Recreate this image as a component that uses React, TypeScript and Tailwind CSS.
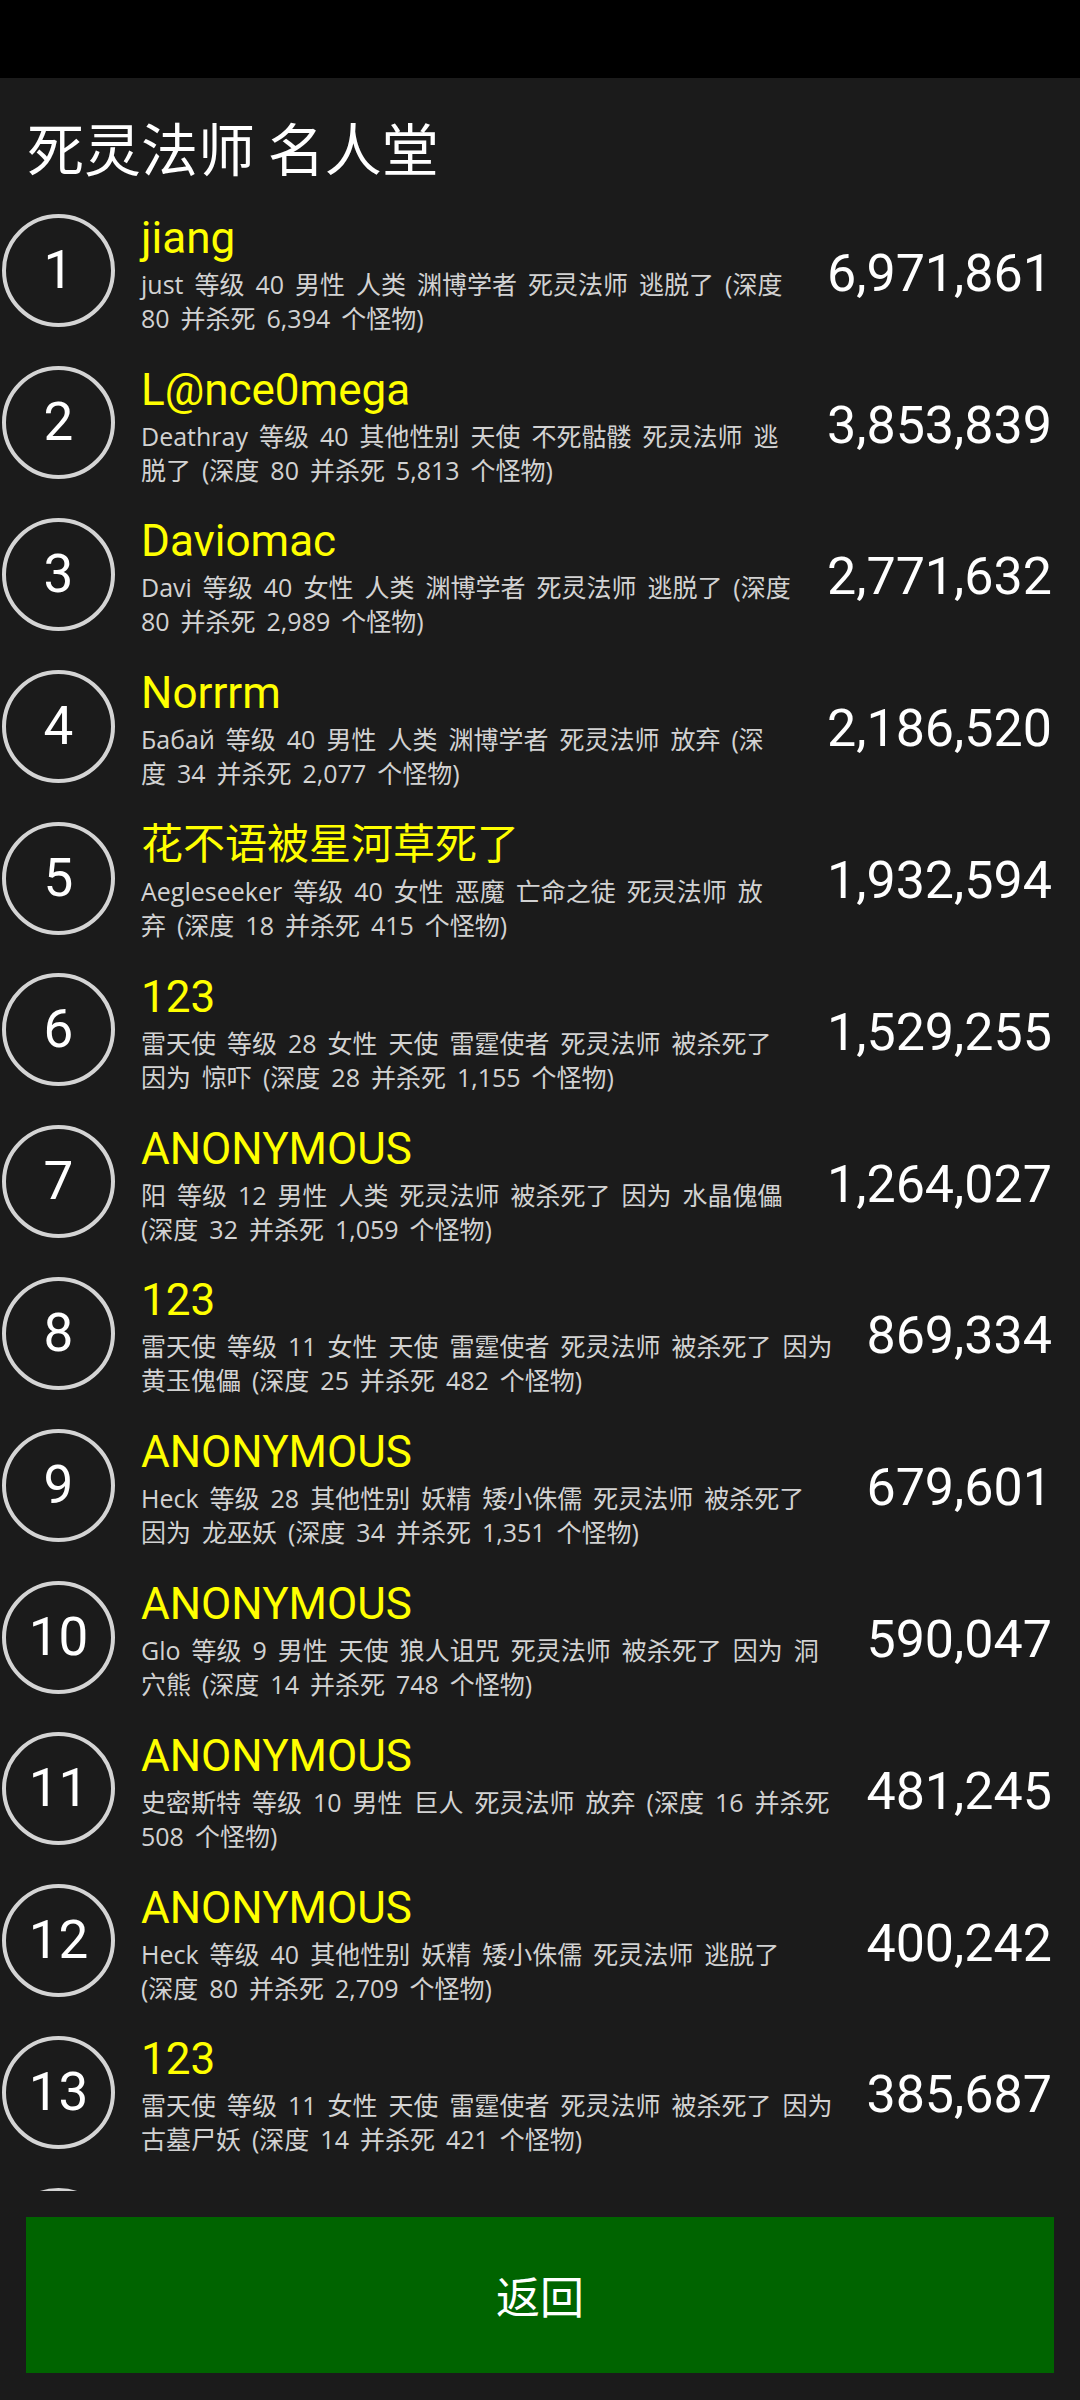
import React from "react";

type Row = { n: number; name: string; l1: string; l2: string; score: string };

const rows: Row[] = [
  { n: 1, name: "jiang", l1: "just 等级 40 男性 人类 渊博学者 死灵法师 逃脱了 (深度", l2: "80 并杀死 6,394 个怪物)", score: "6,971,861" },
  { n: 2, name: "L@nce0mega", l1: "Deathray 等级 40 其他性别 天使 不死骷髅 死灵法师 逃", l2: "脱了 (深度 80 并杀死 5,813 个怪物)", score: "3,853,839" },
  { n: 3, name: "Daviomac", l1: "Davi 等级 40 女性 人类 渊博学者 死灵法师 逃脱了 (深度", l2: "80 并杀死 2,989 个怪物)", score: "2,771,632" },
  { n: 4, name: "Norrrm", l1: "Бабай 等级 40 男性 人类 渊博学者 死灵法师 放弃 (深", l2: "度 34 并杀死 2,077 个怪物)", score: "2,186,520" },
  { n: 5, name: "花不语被星河草死了", l1: "Aegleseeker 等级 40 女性 恶魔 亡命之徒 死灵法师 放", l2: "弃 (深度 18 并杀死 415 个怪物)", score: "1,932,594" },
  { n: 6, name: "123", l1: "雷天使 等级 28 女性 天使 雷霆使者 死灵法师 被杀死了", l2: "因为 惊吓 (深度 28 并杀死 1,155 个怪物)", score: "1,529,255" },
  { n: 7, name: "ANONYMOUS", l1: "阳 等级 12 男性 人类 死灵法师 被杀死了 因为 水晶傀儡", l2: "(深度 32 并杀死 1,059 个怪物)", score: "1,264,027" },
  { n: 8, name: "123", l1: "雷天使 等级 11 女性 天使 雷霆使者 死灵法师 被杀死了 因为", l2: "黄玉傀儡 (深度 25 并杀死 482 个怪物)", score: "869,334" },
  { n: 9, name: "ANONYMOUS", l1: "Heck 等级 28 其他性别 妖精 矮小侏儒 死灵法师 被杀死了", l2: "因为 龙巫妖 (深度 34 并杀死 1,351 个怪物)", score: "679,601" },
  { n: 10, name: "ANONYMOUS", l1: "Glo 等级 9 男性 天使 狼人诅咒 死灵法师 被杀死了 因为 洞", l2: "穴熊 (深度 14 并杀死 748 个怪物)", score: "590,047" },
  { n: 11, name: "ANONYMOUS", l1: "史密斯特 等级 10 男性 巨人 死灵法师 放弃 (深度 16 并杀死", l2: "508 个怪物)", score: "481,245" },
  { n: 12, name: "ANONYMOUS", l1: "Heck 等级 40 其他性别 妖精 矮小侏儒 死灵法师 逃脱了", l2: "(深度 80 并杀死 2,709 个怪物)", score: "400,242" },
  { n: 13, name: "123", l1: "雷天使 等级 11 女性 天使 雷霆使者 死灵法师 被杀死了 因为", l2: "古墓尸妖 (深度 14 并杀死 421 个怪物)", score: "385,687" },
];

const isCjk = (s: string) => /[\u4e00-\u9fff]/.test(s);

function RowItem({ r }: { r: Row }) {
  return (
    <div className="flex h-[151.8px] shrink-0 items-center pl-[2px] pr-[28px]">
      <div className="flex h-[113px] w-[113px] shrink-0 items-center justify-center rounded-full border-[4px] border-[#d4d4d4]">
        <span className="font-['Roboto',sans-serif] text-[53px] leading-none text-white">{r.n}</span>
      </div>
      <div className="ml-[26px] mt-[9px] flex min-w-0 flex-1 flex-col">
        <div
          className={
            isCjk(r.name)
              ? "whitespace-nowrap font-['Roboto','Noto_Sans_CJK_SC',sans-serif] text-[42px] leading-[44px] text-[#ffff00]"
              : "whitespace-nowrap font-['Roboto','Noto_Sans_CJK_SC',sans-serif] text-[44px] leading-[44px] text-[#ffff00]"
          }
        >
          {r.name}
        </div>
        <div className="mt-[7px] whitespace-nowrap font-['Open_Sans','Noto_Sans_CJK_SC',sans-serif] text-[25px] leading-[34px] text-[#d2d2d2] [word-spacing:4.5px]">
          <div>{r.l1}</div>
          <div>{r.l2}</div>
        </div>
      </div>
      <div className="mt-[6px] shrink-0 font-['Roboto',sans-serif] text-[52px] leading-none text-white">{r.score}</div>
    </div>
  );
}

export default function App() {
  return (
    <div className="flex h-[2400px] w-[1080px] flex-col overflow-hidden bg-[#1b1b1b]">
      <div className="h-[78px] shrink-0 bg-black" />
      <div className="flex h-[117px] shrink-0 items-center pl-[27px] pt-[19px]">
        <h1 className="font-['Noto_Sans_CJK_SC',sans-serif] text-[57px] leading-none text-white">死灵法师 名人堂</h1>
      </div>
      <div className="flex h-[1996px] shrink-0 flex-col overflow-hidden">
        {rows.map((r) => (
          <RowItem key={r.n} r={r} />
        ))}
        <div className="flex h-[151.8px] shrink-0 items-center pl-[2px]">
          <div className="h-[113px] w-[113px] shrink-0 rounded-full border-[4px] border-[#d4d4d4]" />
        </div>
      </div>
      <div className="shrink-0 px-[26px] pt-[26px]">
        <button className="flex h-[156px] w-full items-center justify-center bg-[#006400] font-['Noto_Sans_CJK_SC',sans-serif] text-[44px] leading-none text-white">
          返回
        </button>
      </div>
    </div>
  );
}
